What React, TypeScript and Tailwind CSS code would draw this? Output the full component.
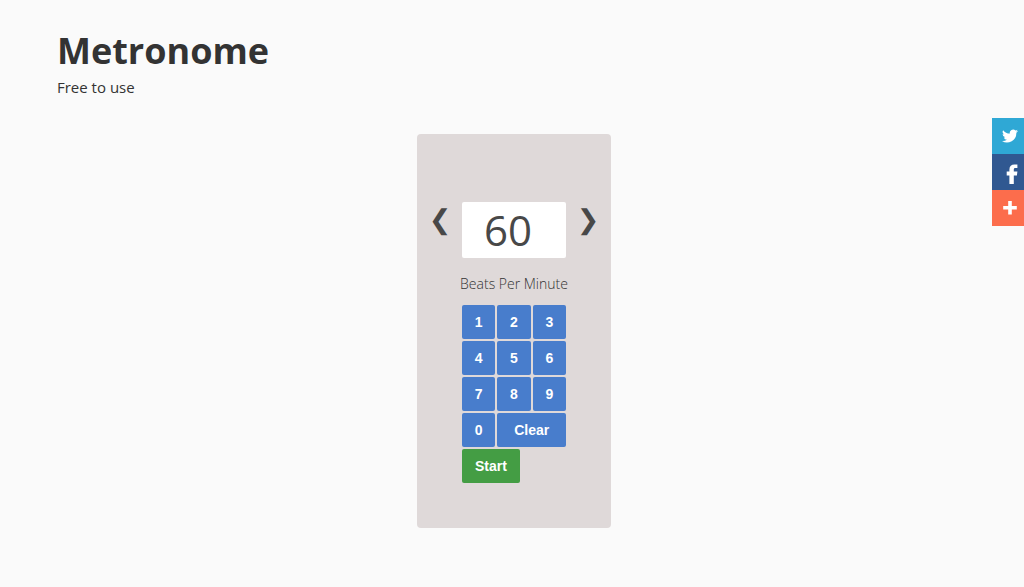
import { useState } from "react";

const DIGITS = ["1", "2", "3", "4", "5", "6", "7", "8", "9", "0"];

const keyClass =
  "h-[34px] rounded-[2px] bg-[#487dcc] font-['Liberation_Sans',Arial,sans-serif] text-sm font-bold text-white hover:bg-[#3c6fbb]";
const arrowClass =
  "w-4 shrink-0 flex justify-center font-['DejaVu_Sans',sans-serif] text-[27px] font-bold leading-9 text-[#484848]";

function Share() {
  return (
    <nav aria-label="Share" className="fixed right-0 top-[118px] flex w-8 flex-col">
      <a href="#twitter" aria-label="Twitter" className="flex h-9 items-center justify-center bg-[#2fa8d5] pl-1">
        <svg viewBox="0 0 24 24" className="size-4" fill="#fff">
          <path d="M24 4.6a10 10 0 0 1-2.8.8 5 5 0 0 0 2.1-2.7 10 10 0 0 1-3.1 1.2 4.9 4.9 0 0 0-8.4 4.5A14 14 0 0 1 1.7 3.2a4.9 4.9 0 0 0 1.5 6.5 5 5 0 0 1-2.2-.6 4.9 4.9 0 0 0 3.9 4.9 5 5 0 0 1-2.2.1 4.9 4.9 0 0 0 4.6 3.4A9.9 9.9 0 0 1 0 19.5 14 14 0 0 0 21.5 7.1 10 10 0 0 0 24 4.6z" />
        </svg>
      </a>
      <a href="#facebook" aria-label="Facebook" className="flex h-9 items-end justify-end bg-[#305891] pb-1.5 pr-[6px]">
        <svg viewBox="0 0 12 20" className="h-5 w-3" fill="#fff">
          <path d="M3.400 20v-8.500H.7V7.500h2.700V5.400C3.400 2.200 5.400.4 8.500.4c1.400 0 2.400.1 2.900.2v3.500H9.500c-1.400 0-1.700.7-1.700 1.600v1.800h3.600l-.5 4H7.800V20z" />
        </svg>
      </a>
      <a href="#more" aria-label="More" className="flex h-9 items-center justify-center bg-[#fc6d4c] pl-1">
        <svg viewBox="0 0 14 14" className="size-3.5" fill="#fff">
          <path d="M5.200 0h3.600v5h5v3.600h-5v5H5.200v-5h-5V5h5z" />
        </svg>
      </a>
    </nav>
  );
}

export default function App() {
  const [bpm, setBpm] = useState("60");
  const [running, setRunning] = useState(false);
  const step = (n: number) => setBpm(String(Math.max(0, Number(bpm) + n)));

  return (
    <div className="min-h-screen bg-[#fafafa] font-['Open_Sans',sans-serif] text-[#333]">
      <header className="px-[57px] pt-6">
        <h1 className="text-4xl font-bold leading-[54px]">Metronome</h1>
        <p className="text-[15px] leading-[18px]">Free to use</p>
      </header>
      <main className="flex justify-center pb-14 pl-1 pt-[38px]">
        <section aria-label="Metronome" className="flex rounded-[4px] bg-[#dfd9d9] px-[15px] pb-[45px] pt-[68px]">
          <div>
            <button aria-label="Slower" className={arrowClass} onClick={() => step(-1)}>❮</button>
          </div>
          <div className="mx-3.5 flex w-[104px] flex-col">
            <input
              aria-label="Beats per minute"
              value={bpm}
              onChange={(e) => setBpm(e.target.value.replace(/\D/g, ""))}
              className="h-14 w-full rounded-[2px] bg-white pl-[22px] text-[42px] leading-[56px] text-[#484848] outline-none"
            />
            <p className="mb-[11px] mt-4 self-center whitespace-nowrap text-sm font-light leading-5 text-[#333]">Beats Per Minute</p>
            <div className="grid grid-cols-3 gap-x-0.5 gap-y-0.5">
              {DIGITS.map((d) => (
                <button key={d} className={keyClass} onClick={() => setBpm(bpm + d)}>{d}</button>
              ))}
              <button className={`${keyClass} col-span-2`} onClick={() => setBpm("")}>Clear</button>
            </div>
            <button
              onClick={() => setRunning(!running)}
              className="mt-0.5 h-[34px] self-start rounded-[2px] bg-[#449d44] px-[13px] font-['Liberation_Sans',Arial,sans-serif] text-sm font-bold text-white"
            >
              {running ? "Stop" : "Start"}
            </button>
          </div>
          <div>
            <button aria-label="Faster" className={arrowClass} onClick={() => step(1)}>❯</button>
          </div>
        </section>
      </main>
      <Share />
    </div>
  );
}
